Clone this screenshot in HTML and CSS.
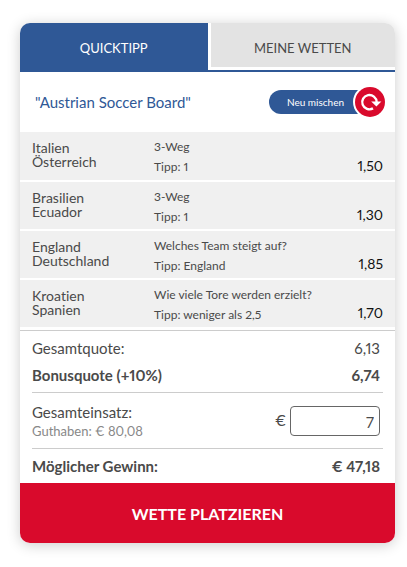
FILE: index.html
```html
<!DOCTYPE html>
<html lang="de">
<head>
<meta charset="utf-8">
<meta name="viewport" content="width=device-width, initial-scale=1">
<title>Quicktipp</title>
<link rel="stylesheet" href="styles.css">
</head>
<body>
<main class="card">
  <nav class="tabs">
    <button type="button" class="tab tab-active">QUICKTIPP</button>
    <button type="button" class="tab">MEINE WETTEN</button>
  </nav>
  <header class="board">
    <h1 class="board-title">"Austrian Soccer Board"</h1>
    <button type="button" class="shuffle">
      <span class="shuffle-label">Neu mischen</span>
      <svg class="shuffle-icon" viewBox="0 0 34 34" aria-hidden="true">
        <circle cx="17" cy="17" r="17" fill="#fff"/>
        <circle cx="17" cy="17" r="15" fill="#d90a2c"/>
        <path d="M20 23.4A7.2 7.2 0 1 1 23.6 17" fill="none" stroke="#fff" stroke-width="2.4"/>
        <path d="M18.2 16.6H28.4L23.4 21.6Z" fill="#fff"/>
      </svg>
    </button>
  </header>
  <table class="bets">
    <tbody>
      <tr><td class="teams">Italien<br>Österreich</td><td class="market">3-Weg<br>Tipp: 1</td><td class="odds">1,50</td></tr>
      <tr><td class="teams">Brasilien<br>Ecuador</td><td class="market">3-Weg<br>Tipp: 1</td><td class="odds">1,30</td></tr>
      <tr><td class="teams">England<br>Deutschland</td><td class="market">Welches Team steigt auf?<br>Tipp: England</td><td class="odds">1,85</td></tr>
      <tr><td class="teams">Kroatien<br>Spanien</td><td class="market">Wie viele Tore werden erzielt?<br>Tipp: weniger als 2,5</td><td class="odds">1,70</td></tr>
    </tbody>
  </table>
  <section class="summary">
    <div class="group quotes">
      <div class="line"><span>Gesamtquote:</span><span>6,13</span></div>
      <div class="line strong"><span>Bonusquote (+10%)</span><span>6,74</span></div>
    </div>
    <div class="group line stake">
      <div>
        <label class="stake-label" for="stake">Gesamteinsatz:</label>
        <div class="balance">Guthaben: € 80,08</div>
      </div>
      <div class="amount"><span>€</span><input class="amount-input" id="stake" type="text" inputmode="decimal" value="7"></div>
    </div>
    <div class="line strong win"><span>Möglicher Gewinn:</span><span>€ 47,18</span></div>
  </section>
  <button type="button" class="submit">WETTE PLATZIEREN</button>
</main>
</body>
</html>
```
FILE: styles.css
```css
* {
  box-sizing: border-box;
}

body {
  margin: 0;
  padding: 23px 12px 24px 20px;
  background: #fff;
  color: #4a4a4a;
  font-family: Lato, "Liberation Sans", sans-serif;
  font-size: 15px;
  font-variant-ligatures: none;
  font-variant-numeric: proportional-nums;
}

button,
input {
  border: 0;
  font: inherit;
}

button {
  cursor: pointer;
}

.card {
  border-radius: 10px;
  background: #fff;
  box-shadow: 0 2px 14px rgba(0, 0, 0, 0.2);
  overflow: hidden;
}

.tabs {
  display: grid;
  grid-template-columns: 1fr 1fr;
  height: 49px;
  border-bottom: 2px solid #2f5896;
}

.tab {
  padding: 6px 0 0;
  border-left: 3px solid #fff;
  border-bottom: 3px solid #fff;
  background: #e3e3e3;
  color: #4a4a4a;
  font-size: 13px;
}

.tab-active {
  padding: 3px 0 0;
  border: 0;
  background: #2f5896;
  color: #fff;
}

.board {
  display: flex;
  align-items: center;
  justify-content: space-between;
  height: 60px;
  padding: 0 8px 0 15px;
}

.board-title {
  margin: 0;
  color: #2f5896;
  font-size: 15px;
  font-weight: 400;
}

.shuffle {
  display: flex;
  align-items: center;
  padding: 0;
  background: none;
  color: #fff;
}

.shuffle-label {
  height: 24px;
  margin-right: -16px;
  padding: 0 25px 0 18px;
  border-radius: 12px 0 0 12px;
  background: #2f5896;
  font-size: 10px;
  line-height: 24px;
}

.shuffle-icon {
  width: 34px;
  height: 34px;
}

.bets {
  width: 100%;
  margin-bottom: 1px;
  border-collapse: collapse;
}

.bets td {
  height: 49px;
  padding: 0;
  border-bottom: 2px solid #fff;
  background: #f0f0f0;
}

.bets .teams {
  width: 134px;
  padding-bottom: 2px;
  padding-left: 12px;
  font-size: 14px;
  line-height: 14px;
}

.bets .market {
  padding-top: 2px;
  font-size: 12px;
  line-height: 20px;
}

.bets .odds {
  padding: 0 12px 6px 0;
  color: #111;
  font-size: 14px;
  line-height: 16px;
  text-align: right;
  vertical-align: bottom;
}

.summary {
  padding: 4px 12px 0;
  border-top: 1px solid #ccc;
}

.group {
  border-bottom: 1px solid #ccc;
}

.line {
  display: flex;
  align-items: center;
  justify-content: space-between;
  padding-right: 3px;
  line-height: 27px;
}

.quotes {
  padding-bottom: 3px;
}

.strong {
  font-weight: 700;
}

.stake {
  height: 56px;
}

.stake-label {
  display: block;
  line-height: 20px;
}

.balance {
  color: #888;
  font-size: 13px;
  line-height: 18px;
}

.amount {
  display: flex;
  align-items: center;
  gap: 4px;
}

.amount-input {
  width: 90px;
  height: 30px;
  padding: 3px 5px 0;
  border: 1px solid #666;
  border-radius: 4px;
  background: #fff;
  color: #4a4a4a;
  text-align: right;
}

.win {
  height: 34px;
}

.submit {
  display: block;
  width: 100%;
  height: 60px;
  background: #d90a2c;
  color: #fff;
  font-size: 16px;
  font-weight: 700;
}
```
